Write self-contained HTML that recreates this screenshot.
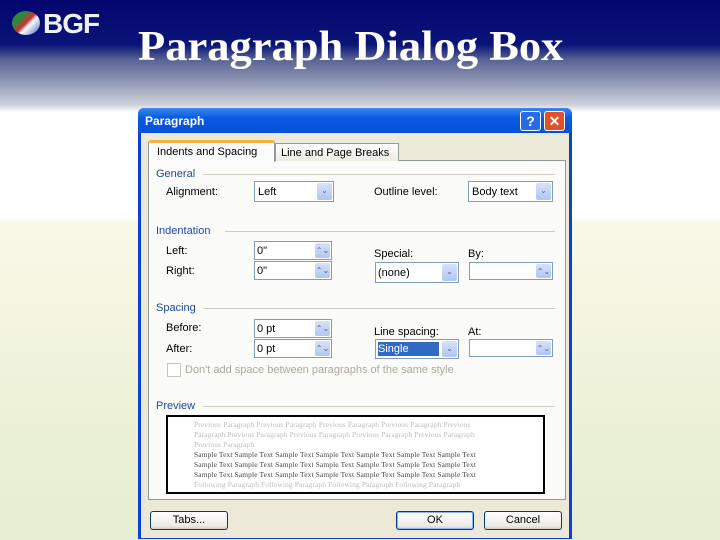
<!DOCTYPE html>
<html><head><style>
*{margin:0;padding:0;box-sizing:border-box}
body{width:720px;height:540px;overflow:hidden;position:relative;font-family:"Liberation Sans",sans-serif;
background:linear-gradient(#02066e 0px,#0a1478 45px,#5a6494 60px,#9aa0b8 85px,#cfd2dc 105px,#fff 112px,#fff 218px,#f8f8e8 222px,#eef2d8 400px,#e4eed0 540px)}
.a{position:absolute}
.t{position:absolute;font-size:11px;color:#000;white-space:nowrap;line-height:12px}
.h{color:#1a48a8}
.line{position:absolute;height:1px;background:#cfcdc0}
.box{position:absolute;background:#fff;border:1px solid #7f9db9}
.btn{position:absolute;width:15px;right:1px;top:1px;bottom:1px;background:linear-gradient(#d6e2fb,#b0c6f0);border-radius:2px;color:#4d6185;font-size:8px;text-align:center;line-height:15px}
.pb{position:absolute;border:1px solid #003c74;border-radius:3px;background:linear-gradient(#fff,#ecebe6 80%,#d6d0c5);font-size:11px;text-align:center;line-height:17px}
.pv{font-family:"Liberation Serif",serif;font-size:7.4px;line-height:10px;white-space:nowrap;overflow:hidden;letter-spacing:0.15px}
</style></head><body>
<div class="a" style="left:12px;top:11px;width:28px;height:24px;border-radius:50%;background:linear-gradient(135deg,#2a8a3a 30%,#d03030 50%,#fff 60%,#3060c0)"></div>
<div class="a" style="left:43px;top:9px;color:#f0f0f8;font-size:28px;line-height:30px;font-weight:bold;letter-spacing:-1px">BGF</div>
<div class="a" style="left:138px;top:24px;color:#fff;font-family:'Liberation Serif',serif;font-weight:bold;font-size:42px;line-height:46px;transform:scaleX(1.06);transform-origin:left">Paragraph Dialog Box</div>

<div class="a" style="left:138px;top:108px;width:434px;height:431px;background:#0842d8;border-radius:6px 6px 0 0"></div>
<div class="a" style="left:138px;top:108px;width:434px;height:25px;background:linear-gradient(#3c86f0,#0a5ae0 40%,#0550d8);border-radius:6px 6px 0 0"></div>
<div class="t" style="left:145px;top:115px;color:#fff;font-weight:bold;font-size:12px">Paragraph</div>
<div class="a" style="left:520px;top:111px;width:21px;height:20px;border:1px solid #fff;border-radius:3px;background:#2a6ae8;color:#fff;font-weight:bold;text-align:center;font-size:14px;line-height:18px">?</div>
<div class="a" style="left:544px;top:111px;width:21px;height:20px;border:1px solid #fff;border-radius:3px;background:#e0502a;color:#fff;font-weight:bold;text-align:center;font-size:14px;line-height:18px">✕</div>
<div class="a" style="left:141px;top:133px;width:428px;height:405px;background:#ece9d8"></div>

<div class="a" style="left:148px;top:160px;width:418px;height:340px;background:#fbfbf9;border:1px solid #919b9c"></div>
<div class="a" style="left:275px;top:143px;width:124px;height:18px;background:linear-gradient(#fff,#ecebe5);border:1px solid #919b9c;border-bottom:none"></div>
<div class="t" style="left:281px;top:147px">Line and Page Breaks</div>
<div class="a" style="left:148px;top:140px;width:127px;height:22px;background:#fcfcfe;border:1px solid #919b9c;border-bottom:none;border-top:3px solid #f7b43a;border-radius:3px 3px 0 0"></div>
<div class="t" style="left:157px;top:146px">Indents and Spacing</div>

<div class="t h" style="left:156px;top:168px">General</div><div class="line" style="left:203px;top:174px;width:352px"></div>
<div class="t" style="left:166px;top:186px">Alignment:</div>
<div class="box" style="left:254px;top:181px;width:80px;height:21px"><span class="t" style="left:3px;top:4px">Left</span><div class="btn">⌄</div></div>
<div class="t" style="left:374px;top:186px">Outline level:</div>
<div class="box" style="left:468px;top:181px;width:85px;height:21px"><span class="t" style="left:3px;top:4px">Body text</span><div class="btn">⌄</div></div>

<div class="t h" style="left:156px;top:225px">Indentation</div><div class="line" style="left:225px;top:231px;width:330px"></div>
<div class="t" style="left:166px;top:245px">Left:</div>
<div class="box" style="left:254px;top:241px;width:78px;height:19px"><span class="t" style="left:2px;top:3px">0"</span><div class="btn">⌃⌄</div></div>
<div class="t" style="left:166px;top:265px">Right:</div>
<div class="box" style="left:254px;top:261px;width:78px;height:19px"><span class="t" style="left:2px;top:3px">0"</span><div class="btn">⌃⌄</div></div>
<div class="t" style="left:374px;top:248px">Special:</div>
<div class="box" style="left:375px;top:262px;width:84px;height:21px"><span class="t" style="left:2px;top:4px">(none)</span><div class="btn">⌄</div></div>
<div class="t" style="left:468px;top:248px">By:</div>
<div class="box" style="left:469px;top:262px;width:84px;height:18px"><div class="btn">⌃⌄</div></div>

<div class="t h" style="left:156px;top:302px">Spacing</div><div class="line" style="left:203px;top:308px;width:352px"></div>
<div class="t" style="left:166px;top:322px">Before:</div>
<div class="box" style="left:254px;top:319px;width:78px;height:19px"><span class="t" style="left:2px;top:3px">0 pt</span><div class="btn">⌃⌄</div></div>
<div class="t" style="left:166px;top:343px">After:</div>
<div class="box" style="left:254px;top:339px;width:78px;height:19px"><span class="t" style="left:2px;top:3px">0 pt</span><div class="btn">⌃⌄</div></div>
<div class="t" style="left:374px;top:326px">Line spacing:</div>
<div class="box" style="left:375px;top:339px;width:84px;height:20px"><span class="a" style="left:2px;top:2px;width:61px;height:14px;background:#316ac5;color:#fff;font-size:11px;line-height:14px">Single</span><div class="btn">⌄</div></div>
<div class="t" style="left:468px;top:326px">At:</div>
<div class="box" style="left:469px;top:339px;width:84px;height:18px"><div class="btn">⌃⌄</div></div>
<div class="a" style="left:167px;top:363px;width:14px;height:14px;border:1px solid #c9c7ba;background:#fff"></div>
<div class="t" style="left:185px;top:364px;color:#aca899">Don't add space between paragraphs of the same style</div>

<div class="t h" style="left:156px;top:400px">Preview</div><div class="line" style="left:203px;top:406px;width:352px"></div>
<div class="a" style="left:166px;top:415px;width:379px;height:79px;background:#fff;border:2px solid #000;padding:3px 62px 0 26px;overflow:hidden">
<div class="pv" style="color:#bbb">Previous Paragraph Previous Paragraph Previous Paragraph Previous Paragraph Previous<br>Paragraph Previous Paragraph Previous Paragraph Previous Paragraph Previous Paragraph<br>Previous Paragraph</div>
<div class="pv" style="color:#444">Sample Text Sample Text Sample Text Sample Text Sample Text Sample Text Sample Text<br>Sample Text Sample Text Sample Text Sample Text Sample Text Sample Text Sample Text<br>Sample Text Sample Text Sample Text Sample Text Sample Text Sample Text Sample Text</div>
<div class="pv" style="color:#bbb">Following Paragraph Following Paragraph Following Paragraph Following Paragraph<br>Following Paragraph Following Paragraph Following Paragraph Following Paragraph<br>Following Paragraph Following Paragraph Following Paragraph Following Paragraph<br>Following Paragraph Following Paragraph Following Paragraph Following Paragraph</div>
</div>

<div class="pb" style="left:150px;top:511px;width:78px;height:19px">Tabs...</div>
<div class="pb" style="left:396px;top:511px;width:78px;height:19px;box-shadow:inset 0 0 0 1px #8cb4f2">OK</div>
<div class="pb" style="left:484px;top:511px;width:78px;height:19px">Cancel</div>
</body></html>
